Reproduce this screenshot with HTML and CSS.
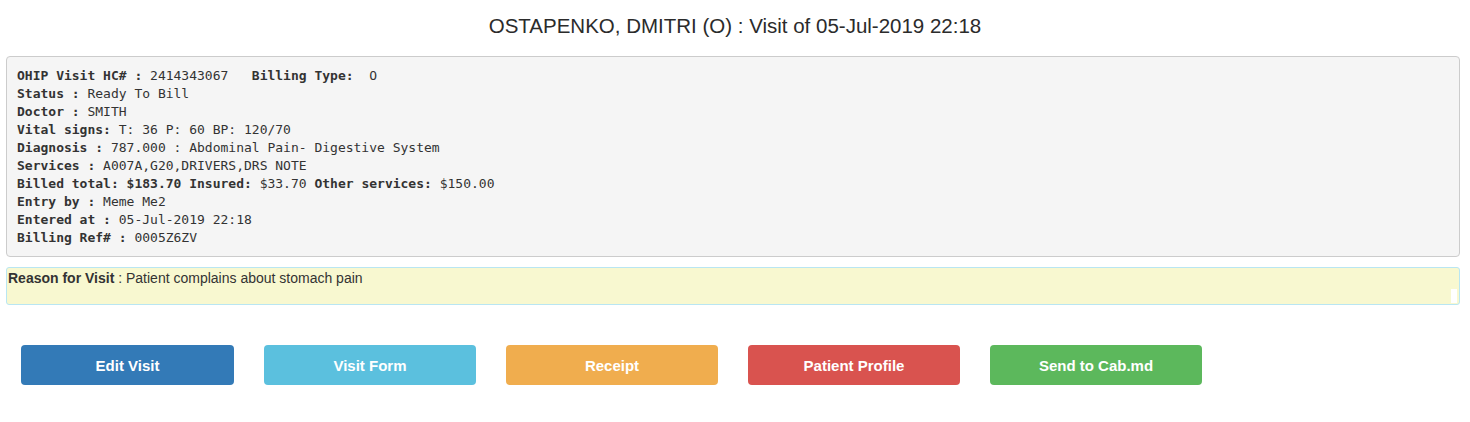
FILE: index.html
```html
<!DOCTYPE html>
<html>
<head>
<meta charset="utf-8">
<link rel="stylesheet" href="styles.css">
</head>
<body>
<h3 class="title">OSTAPENKO, DMITRI (O) : Visit of 05-Jul-2019 22:18</h3>
<pre class="visit"><b>OHIP Visit HC# :</b> 2414343067   <b>Billing Type:</b>  O
<b>Status :</b> Ready To Bill
<b>Doctor :</b> SMITH
<b>Vital signs:</b> T: 36 P: 60 BP: 120/70
<b>Diagnosis :</b> 787.000 : Abdominal Pain- Digestive System
<b>Services :</b> A007A,G20,DRIVERS,DRS NOTE
<b>Billed total: $183.70 Insured:</b> $33.70 <b>Other services:</b> $150.00
<b>Entry by :</b> Meme Me2
<b>Entered at :</b> 05-Jul-2019 22:18
<b>Billing Ref# :</b> 0005Z6ZV</pre>
<div class="reason"><b>Reason for Visit</b> : Patient complains about stomach pain<span class="handle"></span></div>
<div class="actions">
  <button class="btn btn-primary">Edit Visit</button>
  <button class="btn btn-info">Visit Form</button>
  <button class="btn btn-warning">Receipt</button>
  <button class="btn btn-danger">Patient Profile</button>
  <button class="btn btn-success">Send to Cab.md</button>
</div>
</body>
</html>
```
FILE: styles.css
```css
html, body {
  margin: 0;
  padding: 0;
  background: #fff;
  color: #333;
  font-family: "Liberation Sans", Arial, sans-serif;
}
.title {
  margin: 0;
  padding-top: 14px;
  height: 56px;
  box-sizing: border-box;
  line-height: 24px;
  font-size: 20.5px;
  font-weight: normal;
  text-align: center;
  color: #2b2b2b;
}
.visit {
  margin: 0 10px 0 6px;
  padding: 9.5px 10px;
  background: #f5f5f5;
  border: 1px solid #ccc;
  border-radius: 4px;
  font-family: "DejaVu Sans Mono", monospace;
  font-size: 13px;
  line-height: 18px;
  color: #333;
  white-space: pre;
}
.reason {
  position: relative;
  margin: 10px 10px 0 6px;
  min-height: 36px;
  padding: 0 1px;
  background: #f8f8d0;
  border: 1px solid #b9e6f2;
  border-radius: 3px;
  font-size: 14px;
  line-height: 20px;
  color: #333;
}
.handle {
  position: absolute;
  right: 2px;
  bottom: 1px;
  width: 6px;
  height: 14px;
  background: #fff;
}
.actions {
  display: flex;
  gap: 30px;
  padding: 40px 0 0 21px;
}
.btn {
  width: 212px;
  height: 40px;
  padding: 1px 0 0;
  border: none;
  border-radius: 4px;
  color: #fff;
  font-family: "Liberation Sans", Arial, sans-serif;
  font-size: 15px;
  font-weight: bold;
  cursor: pointer;
}
.btn-primary { background: #337ab7; width: 213px; }
.btn-info { background: #5bc0de; }
.btn-warning { background: #f0ad4e; }
.btn-danger { background: #d9534f; }
.btn-success { background: #5cb85c; }
```
